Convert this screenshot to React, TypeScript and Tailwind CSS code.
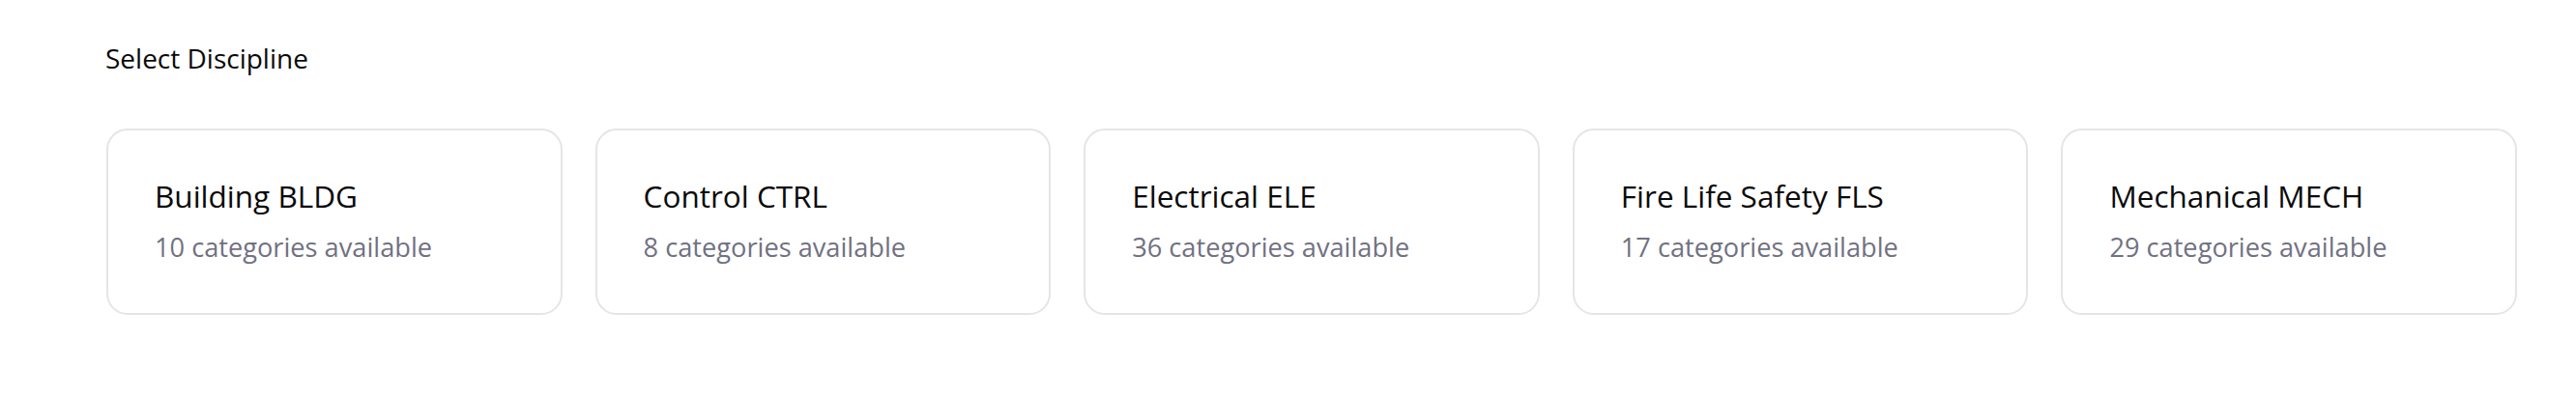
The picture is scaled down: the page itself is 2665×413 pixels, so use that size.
import React from 'react'

type Discipline = {
    name: string
    code: string
    categories: number
}

const disciplines: Discipline[] = [
    { name: 'Building', code: 'BLDG', categories: 10 },
    { name: 'Control', code: 'CTRL', categories: 8 },
    { name: 'Electrical', code: 'ELE', categories: 36 },
    { name: 'Fire Life Safety', code: 'FLS', categories: 17 },
    { name: 'Mechanical', code: 'MECH', categories: 29 },
]

function DisciplineCard({ discipline }: { discipline: Discipline }) {
    return (
        <button className="text-left bg-white border-2 border-[#e5e5e5] rounded-[22px] pt-[45px] pb-[48px] pl-[48px] pr-6 cursor-pointer hover:border-[#d4d4d4] transition">
            <h3 className="text-[31.5px] leading-[46px] text-[#0a0a0a] font-medium">
                {discipline.name} {discipline.code}
            </h3>
            <p className="mt-[10px] text-[27.2px] leading-[40px] text-[#717182]">
                {discipline.categories} categories available
            </p>
        </button>
    )
}

export default function App() {
    return (
        <div className="min-h-screen bg-white font-['Open_Sans',sans-serif] pt-[40px] pl-[109px] pr-[61px]">
            <h2 className="text-[28px] leading-[41.5px] text-[#0a0a0a] font-medium">Select Discipline</h2>

            <div className="grid grid-cols-5 gap-[34px] mt-[51px] pl-px">
                {disciplines.map((d) => (
                    <DisciplineCard key={d.code} discipline={d} />
                ))}
            </div>
        </div>
    )
}
